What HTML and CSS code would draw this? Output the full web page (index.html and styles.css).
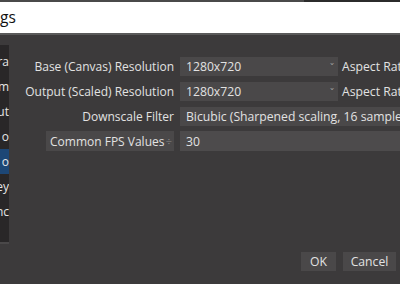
FILE: index.html
```html
<!DOCTYPE html>
<html>
<head>
<meta charset="utf-8">
<link rel="stylesheet" href="styles.css">
</head>
<body>
<div class="topline"><div class="tl-a"></div><div class="tl-b"></div></div>
<div class="titlebar"><span class="title">gs</span></div>
<div class="main">
  <div class="sidebar">
    <div class="item">ra</div>
    <div class="item">m</div>
    <div class="item">ut</div>
    <div class="item">o</div>
    <div class="item sel">o</div>
    <div class="item">ey</div>
    <div class="item">nc</div>
  </div>
  <div class="content">
    <div class="form">
      <div class="row">
        <div class="label">Base (Canvas) Resolution</div>
        <div class="combo short"><span>1280x720</span><span class="arrow">&#711;</span></div>
        <div class="after">Aspect Ratio</div>
      </div>
      <div class="row">
        <div class="label">Output (Scaled) Resolution</div>
        <div class="combo short"><span>1280x720</span><span class="arrow">&#711;</span></div>
        <div class="after">Aspect Ratio</div>
      </div>
      <div class="row">
        <div class="label">Downscale Filter</div>
        <div class="combo wide"><span>Bicubic (Sharpened scaling, 16 samples)</span></div>
      </div>
      <div class="row">
        <div class="label"><div class="fpsbox"><span>Common FPS Values</span><span class="spin">&#247;</span></div></div>
        <div class="combo wide input"><span>30</span></div>
      </div>
    </div>
    <div class="buttons">
      <div class="btn ok">OK</div>
      <div class="btn cancel">Cancel</div>
    </div>
  </div>
</div>
</body>
</html>
```

FILE: styles.css
```css
html, body {
  margin: 0;
  padding: 0;
  width: 400px;
  height: 284px;
  overflow: hidden;
  background: #3c3a3b;
  font-family: "Open Sans", "Noto Sans", sans-serif;
  color: #e2e2e2;
}
.topline {
  display: flex;
  height: 2px;
}
.tl-a { width: 304px; background: #4a4a4a; }
.tl-b { flex: 1; background: #2b2b2b; }
.titlebar {
  height: 31px;
  background: #ffffff;
  border-bottom: 2px solid #5a5a5a;
  display: flex;
  align-items: center;
}
.title {
  font-family: "Open Sans", sans-serif;
  font-size: 15.5px;
  color: #111;
  margin-top: -2px;
}
.main {
  display: flex;
  height: 249px;
}
.sidebar {
  flex: 0 0 9px;
  width: 9px;
  margin-top: 10px;
  height: 199px;
  background: #292728;
  overflow: hidden;
  padding-top: 4px;
  box-sizing: border-box;
  border-bottom: 2px solid #4a4849;
}
.item {
  height: 25px;
  line-height: 25px;
  font-size: 12px;
  text-align: right;
  white-space: nowrap;
  direction: rtl;
  color: #e6e6e6;
}
.item.sel {
  background: #1d4776;
}
.content {
  flex: 1;
  min-width: 0;
  display: flex;
  flex-direction: column;
}
.form {
  display: flex;
  flex-direction: column;
  gap: 5px;
  padding-top: 21px;
}
.row {
  display: flex;
  align-items: center;
  height: 20px;
}
.label {
  flex: 0 0 165px;
  text-align: right;
  font-size: 12px;
  white-space: nowrap;
  display: flex;
  justify-content: flex-end;
}
.combo {
  margin-left: 6px;
  height: 19px;
  background: #4a4849;
  font-size: 12.2px;
  display: flex;
  align-items: center;
  padding-left: 6px;
  box-sizing: border-box;
  white-space: nowrap;
  overflow: hidden;
}
.combo.short {
  flex: 0 0 158px;
  justify-content: space-between;
}
.arrow {
  color: #9a9a9a;
  font-size: 10px;
  padding-right: 4px;
  margin-top: 4px;
}
.combo.wide {
  flex: 1 1 auto;
  min-width: 0;
}
.combo.input {
  height: 20px;
  background: #4d4b4c;
}
.after {
  margin-left: 4px;
  font-size: 12.2px;
  white-space: nowrap;
}
.fpsbox {
  width: 128px;
  height: 20px;
  background: #4a4849;
  display: flex;
  align-items: center;
  justify-content: space-between;
  padding-left: 4px;
  box-sizing: border-box;
}
.spin {
  color: #8a8a8a;
  font-size: 11px;
  padding-right: 2px;
}
.buttons {
  margin-top: auto;
  margin-bottom: 13px;
  display: flex;
  justify-content: flex-end;
  gap: 7px;
  padding-right: 4px;
}
.btn {
  height: 19px;
  background: #4a4849;
  font-size: 12.2px;
  display: flex;
  align-items: center;
  justify-content: center;
}
.ok { width: 35px; }
.cancel { width: 53px; }
```
